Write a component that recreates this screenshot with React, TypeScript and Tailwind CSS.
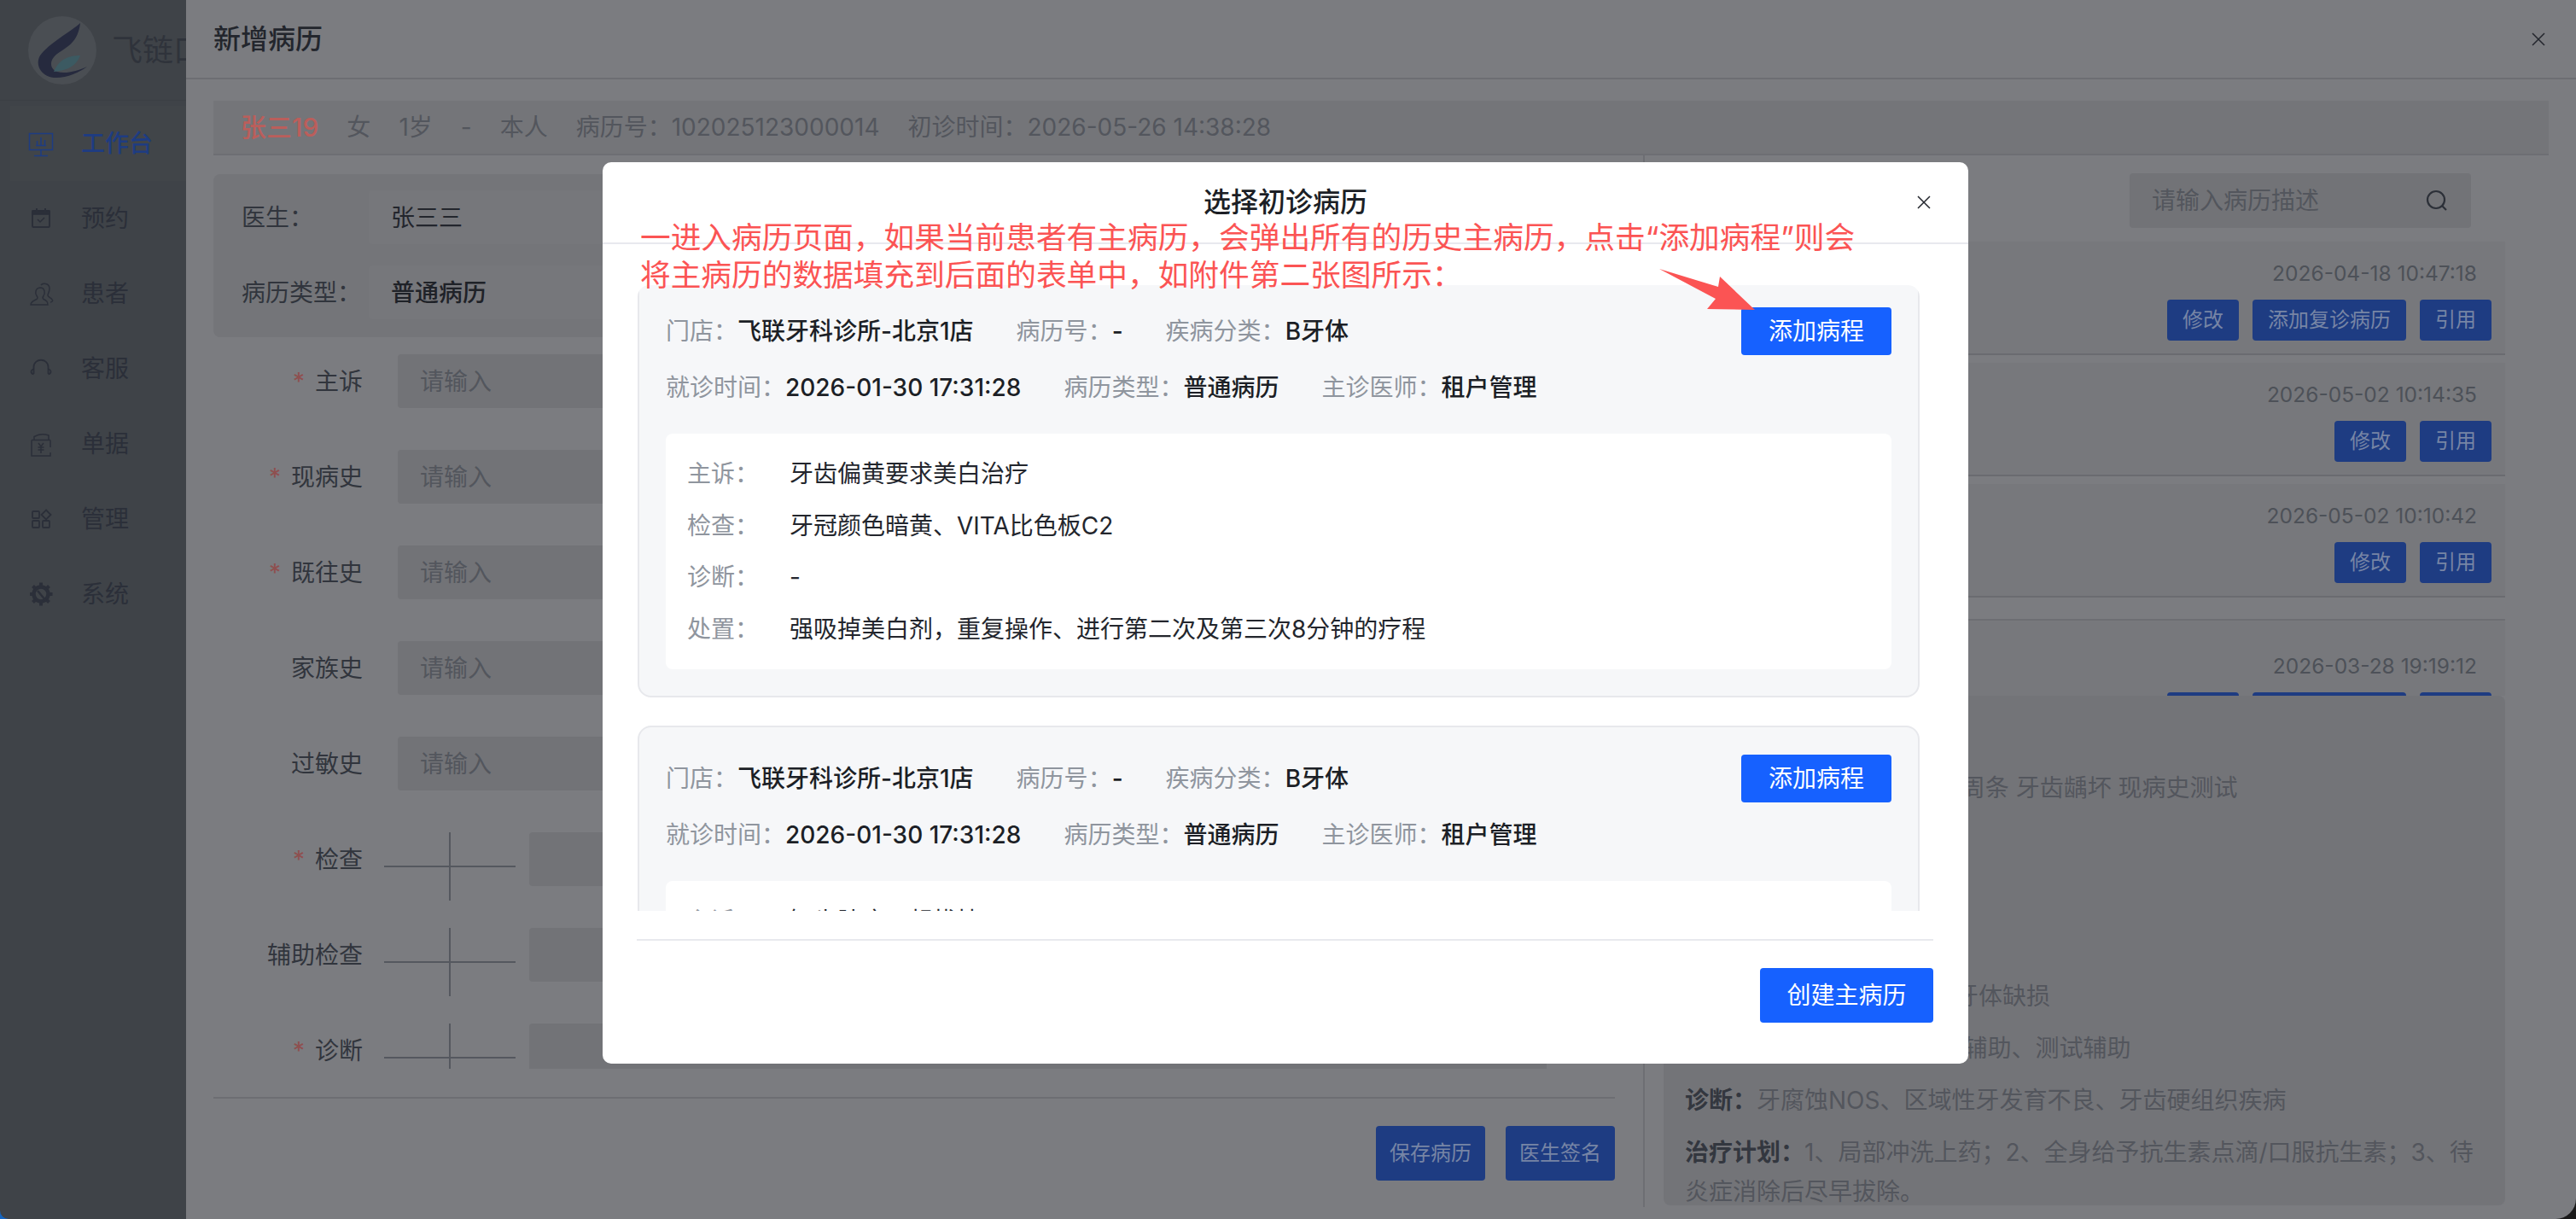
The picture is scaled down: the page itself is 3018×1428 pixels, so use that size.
import React from "react";

const COLON = "\uFF1A";
const COMMA = "\uFF0C";
const SEMI = "\uFF1B";

// dimmed page colours, the whole page behind the modal sits under a dark mask
const navItems = [
  { name: "工作台", active: true },
  { name: "预约" },
  { name: "患者" },
  { name: "客服" },
  { name: "单据" },
  { name: "管理" },
  { name: "系统" },
];

const NavIcon = ({ index }: { index: number }) => {
  const color = index === 0 ? "#1e3c82" : "#2b2f39";
  return (
    <svg width="32" height="32" viewBox="0 0 32 32" fill="none" stroke={color} strokeWidth="1.5">
      {index === 0 && (
        <g>
          <rect x="2.5" y="4.5" width="27" height="19" />
          <path d="M16 23.5V30M8 30.5H24M16 9V18M11.5 13V18M20.5 12V18M10 18.5H22" />
        </g>
      )}
      {index === 1 && (
        <g>
          <rect x="6" y="7" width="20" height="19" rx="1.5" strokeWidth="2" />
          <path d="M6 7H26V11H6Z" fill={color} />
          <path d="M11 4V8M21 4V8" strokeWidth="2" />
          <path d="M12 17L15 20L20 15" />
        </g>
      )}
      {index === 2 && (
        <path d="M4 29C4 25 8 24 11 22.5C12.500 21.500 12 20 11 18.500C9 16 9 9.500 15 9C21 9 21 16 19 18.500C18 20 17.500 21.500 19 22.500C22 24 24 25 24 29ZM16 6C18 3 26 3.500 26 10C26 14 24 16 24 18C24 20 28 20.500 29.500 23.500C30 24.500 29 26 27 26" />
      )}
      {index === 3 && (
        <g strokeWidth="1.8">
          <path d="M7.500 22V14C7.500 3 24.500 3 24.500 14V22" />
          <path d="M7.500 16.500C3.500 17.500 3.500 21.500 7.500 22.500M24.500 16.500C28.500 17.500 28.500 21.500 24.500 22.500" />
        </g>
      )}
      {index === 4 && (
        <g>
          <path d="M8 11V7.500C14 4 20 4.500 25 6V11M5 11.500H27M5 11.500V30H27V26M27 20V11.500" />
          <path d="M13 15L16 19L19 15M12.500 20H19.500M12.500 23H19.500M16 19V27" />
        </g>
      )}
      {index === 5 && (
        <g strokeWidth="1.8">
          <rect x="6" y="7" width="8" height="8" rx="1" />
          <rect x="6" y="18" width="8" height="8" rx="1" />
          <rect x="18" y="18" width="8" height="8" rx="1" />
          <path d="M22 5.500L27.500 11L22 16.500L16.500 11Z" />
        </g>
      )}
      {index === 6 && (
        <g>
          <circle cx="16" cy="16" r="8.500" strokeWidth="4.500" />
          <path d="M16 2.500V7M16 25V29.500M3 16H7M25 16H29.500M6.500 6.500L9.500 9.500M22.500 22.500L25.500 25.500M25.500 6.500L22.500 9.500M9.500 22.500L6.500 25.500" strokeWidth="4" />
          <path d="M12 12L22 24" strokeWidth="2.500" />
        </g>
      )}
    </svg>
  );
};

const CloseIcon = ({ color }: { color: string }) => (
  <svg width="16" height="16" viewBox="0 0 16 16" fill="none" stroke={color} strokeWidth="1.5">
    <path d="M1 1L15 15M15 1L1 15" />
  </svg>
);

// tooth position cross in front of the 检查 inputs
const ToothCross = () => (
  <svg width="154" height="80" viewBox="0 0 154 80" fill="none" stroke="#55585f" strokeWidth="2" className="shrink-0">
    <path d="M0 40H154M77 0V80" />
  </svg>
);

const formRows = [
  { label: "主诉", required: true },
  { label: "现病史", required: true },
  { label: "既往史", required: true },
  { label: "家族史" },
  { label: "过敏史" },
  { label: "检查", required: true, cross: true },
  { label: "辅助检查", cross: true },
  { label: "诊断", required: true, cross: true },
];

const FormRow = (props: { label: string; required?: boolean; cross?: boolean }) => (
  <div className="flex items-start h-[112px]">
    <div className="w-[175px] h-[63px] flex items-center justify-end text-[28px] text-[#31353d]">
      {props.required ? <span className="mr-[12px] text-[#8f4f4f]">*</span> : null}
      {props.label}
    </div>
    {props.cross ? (
      <div className="flex ml-[25px]">
        <ToothCross />
        <div className="ml-[16px] w-[1192px] h-[63px] rounded-[4px] bg-[#727377]" />
      </div>
    ) : (
      <div className="ml-[41px] w-[1346px] h-[63px] rounded-[4px] bg-[#727377] flex items-center pl-[26px] text-[28px] text-[#53565d]">
        请输入
      </div>
    )}
  </div>
);

const records = [
  { time: "2026-04-18 10:47:18", follow: true },
  { time: "2026-05-02 10:14:35" },
  { time: "2026-05-02 10:10:42" },
];

const DimButton = ({ children }: { children: React.ReactNode }) => (
  <div className="h-[48px] px-[18px] rounded-[4px] bg-[#1e3c82] text-[#7785a5] text-[24px] flex items-center">
    {children}
  </div>
);

const RecordRow = (props: { time: string; follow?: boolean }) => (
  <div className="h-[133px] mb-[9px] border-b-2 border-[#6a6b70] bg-[#77787c] pr-[16px] pt-[20px] flex flex-col items-end">
    <div className="h-[34px] leading-[34px] pr-[17px] text-[24.500px] text-[#4d5158]">{props.time}</div>
    <div className="mt-[14px] flex gap-[16px]">
      <DimButton>修改</DimButton>
      {props.follow ? <DimButton>添加复诊病历</DimButton> : null}
      <DimButton>引用</DimButton>
    </div>
  </div>
);

const detailLines = [
  { key: `主诉${COLON}`, value: "牙齿疼痛" },
  { key: `现病史${COLON}`, value: "牙齿疼痛 牙结石 周条 牙齿龋坏 现病史测试" },
  { key: `既往史${COLON}`, value: "无" },
  { key: `家族史${COLON}`, value: "无" },
  { key: `过敏史${COLON}`, value: "无" },
  { key: `检查${COLON}`, value: "牙龈红肿、牙结石 牙体缺损" },
  { key: `辅助检查${COLON}`, value: "全景CT、测试 辅助、测试辅助" },
  { key: `诊断${COLON}`, value: "牙腐蚀NOS、区域性牙发育不良、牙齿硬组织疾病" },
  {
    key: `治疗计划${COLON}`,
    value: `1、局部冲洗上药${SEMI}2、全身给予抗生素点滴/口服抗生素${SEMI}3、待炎症消除后尽早拔除。`,
  },
];

const Field = (props: { label: string; value: string }) => (
  <div className="flex text-[28px] leading-[40px] whitespace-nowrap">
    <span className="text-[#8f959e]">
      {props.label}
      {COLON}
    </span>
    <span className="font-medium text-[#1c1f26]">{props.value}</span>
  </div>
);

const CaseCard = (props: { rows: [string, string][] }) => (
  <div className="border-2 border-[#e7e8ec] rounded-[16px] bg-[#f6f7f9] pt-[32px] px-[31px] pb-[31px] mb-[33px]">
    <div className="flex items-center justify-between h-[56px]">
      <div className="flex gap-[50px]">
        <Field label="门店" value="飞联牙科诊所-北京1店" />
        <Field label="病历号" value="-" />
        <Field label="疾病分类" value="B牙体" />
      </div>
      <button className="w-[176px] h-[56px] rounded-[4px] bg-[#1661ff] text-white text-[28px]">添加病程</button>
    </div>
    <div className="flex gap-[50px] mt-[18px]">
      <Field label="就诊时间" value="2026-01-30 17:31:28" />
      <Field label="病历类型" value="普通病历" />
      <Field label="主诊医师" value="租户管理" />
    </div>
    <div className="mt-[34px] rounded-[8px] bg-white py-[17px] pl-[25px]">
      {props.rows.map(([label, value]) => (
        <div key={label} className="flex items-center h-[60.500px] text-[28px]">
          <span className="w-[120px] text-[#8f959e]">
            {label}
            {COLON}
          </span>
          <span className="text-[#23262d]">{value}</span>
        </div>
      ))}
    </div>
  </div>
);

const PickCaseModal = () => (
  <div className="absolute left-[706px] top-[190px] w-[1600px] h-[1056px] rounded-[10px] bg-white flex flex-col">
    <div className="relative h-[96px] shrink-0 border-b-2 border-[#e8e9ee] flex items-center justify-center text-[32px] font-medium text-[#1c1f26]">
      选择初诊病历
      <div className="absolute right-[44px] top-[39px] flex">
        <CloseIcon color="#23262d" />
      </div>
    </div>
    <div className="mt-[48px] ml-[41px] w-[1502px] h-[733px] shrink-0 overflow-hidden rounded-t-[14px]">
      <div className="-mt-[8px]">
        <CaseCard
          rows={[
            ["主诉", "牙齿偏黄要求美白治疗"],
            ["检查", "牙冠颜色暗黄、VITA比色板C2"],
            ["诊断", "-"],
            ["处置", `强吸掉美白剂${COMMA}重复操作、进行第二次及第三次8分钟的疗程`],
          ]}
        />
        <CaseCard
          rows={[
            ["主诉", `智齿肿痛${COMMA}想拔掉`],
            ["检查", "-"],
            ["诊断", "-"],
            ["处置", "-"],
          ]}
        />
      </div>
    </div>
    <div className="mt-[33px] ml-[40px] mr-[41px] border-t-2 border-[#e8e9ee] pt-[32px] flex justify-end">
      <button className="w-[203px] h-[64px] rounded-[4px] bg-[#1661ff] text-white text-[28px]">创建主病历</button>
    </div>
  </div>
);

export default function App() {
  return (
    <div className="relative w-[3018px] h-[1428px] overflow-hidden bg-[#1a1a1a] font-[Inter,'Noto_Sans_CJK_SC',sans-serif]">
      {/* desktop showing through the rounded window corner */}
      <div className="absolute left-0 bottom-0 w-[14px] h-[14px] bg-[#1565c0]" />
      <div className="relative w-full h-full flex overflow-hidden rounded-br-[24px] rounded-bl-[10px]">
        {/* side menu */}
        <div className="w-[218px] shrink-0 bg-[#3f4348] overflow-hidden">
          <div className="h-[118px] border-b border-[#3b3f44] flex items-center pl-[33px] whitespace-nowrap">
            <svg width="80" height="80" viewBox="0 0 80 80" className="shrink-0">
              <circle cx="40" cy="40" r="40" fill="#4a4e53" />
              <path
                d="M61 8C50 18 24 32 14 46C8 56 14 70 30 72C44 73 60 66 69 59C58 64 44 68 34 65C26 62 25 54 30 48C38 38 58 36 61 8Z"
                fill="#262a3e"
              />
              <path d="M61 46C48 46 36 50 30 65C42 64 56 60 61 46Z" fill="#3c5a62" />
            </svg>
            <span className="ml-[18px] text-[36px] text-[#2f333b]">飞链口腔</span>
          </div>
          <div className="pt-[6px]">
            {navItems.map((item, i) => (
              <div
                key={item.name}
                className={
                  item.active
                    ? "h-[88px] ml-[12px] pl-[20px] flex items-center bg-[#414549] text-[28px] text-[#1e3c82] font-medium"
                    : "h-[88px] ml-[12px] pl-[20px] flex items-center text-[28px] text-[#2b2f39]"
                }
              >
                <NavIcon index={i} />
                <span className="ml-[31px]">{item.name}</span>
              </div>
            ))}
          </div>
        </div>

        {/* drawer */}
        <div className="flex-1 min-w-0 bg-[#7b7c80] flex flex-col">
          <div className="h-[93px] shrink-0 border-b-2 border-[#6d6e73] pl-[32px] pr-[36px] flex items-center justify-between">
            <span className="text-[32px] font-medium text-[#23262d]">新增病历</span>
            <CloseIcon color="#23262d" />
          </div>
          <div className="mx-[32px] mt-[25px] h-[64px] shrink-0 bg-[#747579] border-b-2 border-[#6d6e73] pl-[32px] flex items-center gap-[33px] text-[28px] text-[#53565d]">
            <span className="text-[30px] font-medium text-[#bb5e5b]">张三19</span>
            <span>女</span>
            <span>1岁</span>
            <span>-</span>
            <span>本人</span>
            <span>病历号{COLON}102025123000014</span>
            <span>初诊时间{COLON}2026-05-26 14:38:28</span>
          </div>

          <div className="ml-[32px] mr-[32px] flex h-[1232px]">
            {/* left form */}
            <div className="w-[1642px] shrink-0 flex flex-col">
              <div className="mt-[22px] h-[191px] rounded-[8px] bg-[#747579] pl-[33px] pt-[19px] text-[28px]">
                <div className="flex items-center h-[63px]">
                  <span className="w-[149px] text-[#31353d]">医生{COLON}</span>
                  <div className="flex-1 h-full rounded-[4px] bg-[#76777b] pl-[26px] flex items-center text-[#23262d]">张三三</div>
                </div>
                <div className="flex items-center h-[63px] mt-[25px]">
                  <span className="w-[149px] text-[#31353d]">病历类型{COLON}</span>
                  <div className="flex-1 h-full rounded-[4px] bg-[#76777b] pl-[26px] flex items-center font-medium text-[#1f2228]">普通病历</div>
                </div>
              </div>
              <div className="h-[857px] shrink-0 overflow-hidden pt-[20px]">
                {formRows.map((row) => (
                  <FormRow key={row.label} {...row} />
                ))}
              </div>
              <div className="mt-[33px] border-t-2 border-[#6d6e73] pt-[32px] flex justify-end gap-[24px]">
                <div className="w-[128px] h-[64px] rounded-[4px] bg-[#1e3c82] text-[#7785a5] text-[24px] flex items-center justify-center">保存病历</div>
                <div className="w-[128px] h-[64px] rounded-[4px] bg-[#1e3c82] text-[#7785a5] text-[24px] flex items-center justify-center">医生签名</div>
              </div>
            </div>

            {/* right history */}
            <div className="ml-[33px] flex-1 min-w-0 border-l-2 border-[#6d6e73] pl-[22px] pr-[51px] flex flex-col">
              <div className="mt-[21px] mr-[40px] h-[64px] shrink-0 self-end w-[400px] rounded-[4px] bg-[#727377] px-[26px] flex items-center justify-between text-[28px] text-[#53565d]">
                请输入病历描述
                <svg width="28" height="28" viewBox="0 0 28 28" fill="none" stroke="#2c3038" strokeWidth="2.200">
                  <circle cx="13" cy="13" r="10" />
                  <path d="M20 20L25 25" />
                </svg>
              </div>
              <div className="mt-[16px] shrink-0">
                {records.map((r) => (
                  <RecordRow key={r.time} time={r.time} follow={r.follow} />
                ))}
              </div>
              <div className="mt-[16px] h-[90px] shrink-0 overflow-hidden border-t-2 border-[#6d6e73] bg-[#77787c] pr-[16px] pt-[36px] flex flex-col items-end">
                <div className="h-[34px] leading-[34px] pr-[17px] text-[24.500px] text-[#4d5158]">2026-03-28 19:19:12</div>
                <div className="mt-[14px] flex gap-[16px]">
                  <DimButton>修改</DimButton>
                  <DimButton>添加复诊病历</DimButton>
                  <DimButton>引用</DimButton>
                </div>
              </div>
              <div className="h-[597px] shrink-0 rounded-[8px] bg-[#737478] pl-[25px] pr-[28px] pt-[24px] text-[28px] text-[#53565d]">
                {detailLines.map((line) => (
                  <p key={line.key} className="mb-[15px] leading-[46px]">
                    <span className="font-semibold text-[#33373f]">{line.key}</span>
                    {line.value}
                  </p>
                ))}
              </div>
            </div>
          </div>
        </div>

        <PickCaseModal />

        {/* red note drawn on top of the screenshot */}
        <div className="absolute left-[750px] top-[256px] text-[35.700px] leading-[44px] text-[#fb5454] whitespace-nowrap">
          <div>{`一进入病历页面${COMMA}如果当前患者有主病历${COMMA}会弹出所有的历史主病历${COMMA}点击\u201C添加病程\u201D则会`}</div>
          <div>{`将主病历的数据填充到后面的表单中${COMMA}如附件第二张图所示${COLON}`}</div>
        </div>
        <svg className="absolute left-[1940px] top-[310px]" width="120" height="60" viewBox="0 0 120 60">
          <path d="M4 5L73 26L75 14L116 53L60 52L70 40Z" fill="#fb5454" />
        </svg>
      </div>
    </div>
  );
}
